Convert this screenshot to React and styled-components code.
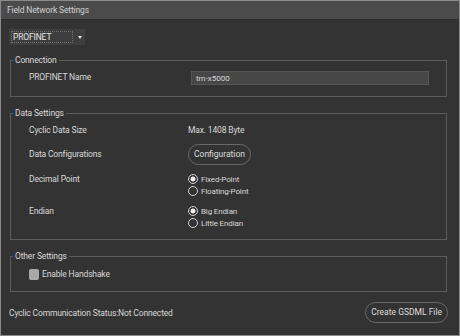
import styled, { createGlobalStyle } from "styled-components";

const GlobalStyle = createGlobalStyle`
  html, body {
    margin: 0;
    padding: 0;
    background: #333333;
  }
  * {
    box-sizing: border-box;
  }
`;

const App = () => {
  return (
    <>
      <GlobalStyle />
      <Window>
        <TitleBar>Field Network Settings</TitleBar>
        <Body>
          <Dropdown>
            <span className="value">PROFINET</span>
            <Arrow />
          </Dropdown>

          <Group top={15}>
            <Caption>Connection</Caption>
            <GroupContent pt={5} pb={11}>
              <Rows>
                <Label>PROFINET Name</Label>
                <TextInput defaultValue="tm-x5000" />
              </Rows>
            </GroupContent>
          </Group>

          <Group top={16}>
            <Caption>Data Settings</Caption>
            <GroupContent pt={5} pb={10}>
              <Rows>
                <Label>Cyclic Data Size</Label>
                <Value>Max. 1408 Byte</Value>

                <Label tall>Data Configurations</Label>
                <div>
                  <PillButton>Configuration</PillButton>
                </div>

                <Label>Decimal Point</Label>
                <RadioGroup>
                  <Radio checked>Fixed-Point</Radio>
                  <Radio>Floating-Point</Radio>
                </RadioGroup>

                <Label>Endian</Label>
                <RadioGroup>
                  <Radio checked>Big Endian</Radio>
                  <Radio>Little Endian</Radio>
                </RadioGroup>
              </Rows>
            </GroupContent>
          </Group>

          <Group top={16}>
            <Caption>Other Settings</Caption>
            <GroupContent pt={6} pb={11}>
              <CheckRow>
                <CheckBox />
                <span>Enable Handshake</span>
              </CheckRow>
            </GroupContent>
          </Group>

          <Footer>
            <Value>Cyclic Communication Status:Not Connected</Value>
            <PillButton>Create GSDML File</PillButton>
          </Footer>
        </Body>
      </Window>
    </>
  );
};

export default App;

const Radio = ({ checked, children }) => (
  <RadioRow>
    <RadioDot checked={checked} />
    <span>{children}</span>
  </RadioRow>
);

const Window = styled.div`
  width: 460px;
  height: 336px;
  border: 1px solid #8a8a8a;
  background: #333333;
  display: flex;
  flex-direction: column;
  font-family: Roboto, "Noto Sans", sans-serif;
  font-size: 8.5px;
  letter-spacing: -0.15px;
  color: #d8d8d8;
`;

const TitleBar = styled.div`
  height: 19px;
  background: #4b4b4b;
  border-bottom: 1px solid #2c2c2c;
  padding-left: 6px;
  line-height: 18px;
  color: #d0d0d0;
`;

const Body = styled.div`
  flex: 1;
  padding: 9px 12px 0 9px;
  display: flex;
  flex-direction: column;
`;

const Dropdown = styled.div`
  width: 76px;
  height: 16px;
  margin-left: -1px;
  background: #3e3e3e;
  display: flex;
  align-items: center;
  padding: 0 2px;
  .value {
    width: 62px;
    height: 12px;
    line-height: 10px;
    border: 1px dotted #707070;
    padding-left: 1px;
    color: #e6e6e6;
  }
`;

const Arrow = styled.span`
  margin-left: 5px;
  width: 0;
  height: 0;
  border-left: 2.5px solid transparent;
  border-right: 2.5px solid transparent;
  border-top: 3px solid #e8e8e8;
`;

const Group = styled.section`
  margin-top: ${({ top }) => top}px;
  border: 1px solid #5c5c5c;
  display: flex;
  flex-direction: column;
`;

const Caption = styled.div`
  align-self: flex-start;
  margin: -7px 0 0 2px;
  padding: 0 2px;
  line-height: 12px;
  background: #333333;
  color: #d8d8d8;
`;

const GroupContent = styled.div`
  padding: ${({ pt }) => pt}px 17px ${({ pb }) => pb}px 18px;
`;

const Rows = styled.div`
  display: grid;
  grid-template-columns: 159px 1fr;
  row-gap: 8px;
  align-items: start;
`;

const Label = styled.div`
  line-height: ${({ tall }) => (tall ? "21px" : "12px")};
`;

const Value = styled.div`
  line-height: 12px;
`;

const TextInput = styled.input`
  width: calc(100% - 3px);
  height: 14px;
  margin-left: 3px;
  background: #474747;
  border: 1px solid #555555;
  color: #d8d8d8;
  font: inherit;
  font-size: 8px;
  padding: 0 4px;
  outline: none;
`;

const PillButton = styled.button`
  height: 21px;
  padding: 0 5px;
  border: 1px solid #6a6a6a;
  border-radius: 11px;
  background: #333333;
  color: #dcdcdc;
  font: inherit;
  line-height: 19px;
`;

const RadioGroup = styled.div`
  display: flex;
  flex-direction: column;
`;

const RadioRow = styled.div`
  display: flex;
  align-items: center;
  height: 12px;
  gap: 3px;
  font-size: 8px;
`;

const RadioDot = styled.span`
  width: 10px;
  height: 10px;
  border-radius: 50%;
  border: 1px solid #d0d0d0;
  background: ${({ checked }) =>
    checked
      ? "radial-gradient(circle, #f0f0f0 0 2.2px, transparent 2.8px)"
      : "transparent"};
`;

const CheckRow = styled.div`
  display: flex;
  align-items: center;
  gap: 3px;
  height: 12px;
`;

const CheckBox = styled.span`
  width: 10px;
  height: 11px;
  border-radius: 2px;
  background: #a9a9a9;
`;

const Footer = styled.div`
  margin: 10px -1px 0;
  display: flex;
  justify-content: space-between;
  align-items: center;
`;
